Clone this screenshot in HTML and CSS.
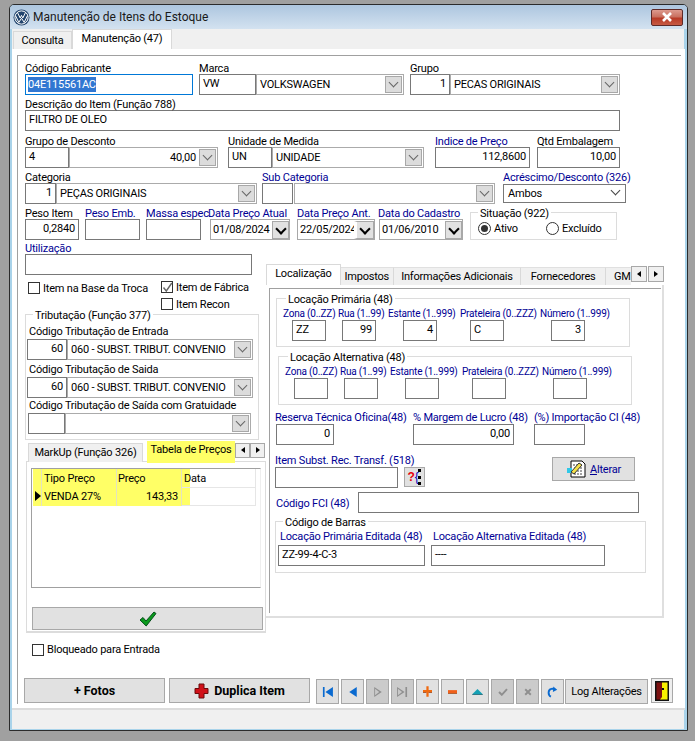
FILE: index.html
```html
<!DOCTYPE html>
<html lang="pt-br">
<head>
    <meta charset="UTF-8">
    <title>Manutenção de Itens do Estoque</title>
    <link rel="stylesheet" href="styles.css">
</head>
<body>
<div class="win">
    <div class="title">
        <svg class="logo" width="17" height="17" viewBox="0 0 17 17">
            <circle cx="8.5" cy="8.5" r="8" fill="#23456e"/>
            <circle cx="8.5" cy="8.5" r="6.6" fill="none" stroke="#fff" stroke-width="1"/>
            <path d="M4.6 3.8 L7.2 9 L8.5 6.4 L9.8 9 L12.4 3.8 M2.6 6.8 L5.8 13.4 L8.5 9.2 L11.2 13.4 L14.4 6.8" fill="none" stroke="#fff" stroke-width="1"/>
        </svg>
        <span class="title-text">Manutenção de Itens do Estoque</span>
        <div class="close">
            <svg width="12" height="10" viewBox="0 0 12 10"><path d="M2 1 L10 9 M10 1 L2 9" stroke="#fff" stroke-width="2.6"/></svg>
        </div>
    </div>

    <div class="client">
        <div class="main-tabs">
            <div class="main-tab">Consulta</div>
            <div class="main-tab on">Manutenção (47)</div>
        </div>

        <div class="page">
            <div class="group">

                <div class="row r1">
                    <div class="f f-codigo">
                        <label>Código Fabricante</label>
                        <div class="box focus"><span class="sel">04E115561AC</span></div>
                    </div>
                    <div class="f f-marca">
                        <label>Marca</label>
                        <div class="pair"><div class="box b-57">VW</div><div class="combo">VOLKSWAGEN<i class="arrow"></i></div></div>
                    </div>
                    <div class="f f-grupo">
                        <label>Grupo</label>
                        <div class="pair"><div class="box b-40 num">1</div><div class="combo">PECAS ORIGINAIS<i class="arrow"></i></div></div>
                    </div>
                </div>

                <div class="row r2">
                    <div class="f f-desc">
                        <label>Descrição do Item (Função 788)</label>
                        <div class="box">FILTRO DE OLEO</div>
                    </div>
                </div>

                <div class="row r3">
                    <div class="f f-gdesc">
                        <label>Grupo de Desconto</label>
                        <div class="pair"><div class="box b-44">4</div><div class="combo num">40,00<i class="arrow"></i></div></div>
                    </div>
                    <div class="f f-unid">
                        <label>Unidade de Medida</label>
                        <div class="pair"><div class="box b-44">UN</div><div class="combo">UNIDADE<i class="arrow"></i></div></div>
                    </div>
                    <div class="f f-indice">
                        <label class="blue">Indice de Preço</label>
                        <div class="box num">112,8600</div>
                    </div>
                    <div class="f f-qtd">
                        <label>Qtd Embalagem</label>
                        <div class="box num">10,00</div>
                    </div>
                </div>

                <div class="row r4">
                    <div class="f f-cat">
                        <label>Categoria</label>
                        <div class="pair"><div class="box b-31 num">1</div><div class="combo">PEÇAS ORIGINAIS<i class="arrow"></i></div></div>
                    </div>
                    <div class="f f-sub">
                        <label class="blue">Sub Categoria</label>
                        <div class="pair"><div class="box b-31"></div><div class="combo gap1"><i class="arrow"></i></div></div>
                    </div>
                    <div class="f f-acres">
                        <label class="blue">Acréscimo/Desconto (326)</label>
                        <div class="select">Ambos<i class="chev"></i></div>
                    </div>
                </div>

                <div class="row r5">
                    <div class="f f-peso">
                        <label>Peso Item</label>
                        <div class="box num">0,2840</div>
                    </div>
                    <div class="f f-emb">
                        <label class="blue">Peso Emb.</label>
                        <div class="box"></div>
                    </div>
                    <div class="f f-massa">
                        <label class="blue">Massa espec.</label>
                        <div class="box"></div>
                    </div>
                    <div class="f f-d1">
                        <label class="blue nowrap">Data Preço Atual</label>
                        <div class="date">01/08/2024<i class="dbtn"></i></div>
                    </div>
                    <div class="f f-d2">
                        <label class="blue nowrap">Data Preço Ant.</label>
                        <div class="date">22/05/2024<i class="dbtn"></i></div>
                    </div>
                    <div class="f f-d3">
                        <label class="blue nowrap">Data do Cadastro</label>
                        <div class="date">01/06/2010<i class="dbtn"></i></div>
                    </div>
                    <fieldset class="situacao">
                        <legend>Situação (922)</legend>
                        <div class="radios">
                            <span class="radio on"></span><span class="r-ativo">Ativo</span>
                            <span class="radio"></span><span>Excluído</span>
                        </div>
                    </fieldset>
                </div>

                <div class="lower">
                    <div class="left">
                        <label class="blue">Utilização</label>
                        <div class="box b-227"></div>

                        <div class="checks">
                            <div class="check c-base"><span class="cb"></span>Item na Base da Troca</div>
                            <div>
                                <div class="check"><span class="cb">
                                    <svg width="11" height="11" viewBox="0 0 11 11"><path d="M1.5 5.5 L4.3 9 L9.8 1" fill="none" stroke="#666" stroke-width="1.4"/></svg>
                                </span>Item de Fábrica</div>
                                <div class="check"><span class="cb"></span>Item Recon</div>
                            </div>
                        </div>

                        <fieldset class="trib">
                            <legend>Tributação (Função 377)</legend>
                            <label class="t-l1">Código Tributação de Entrada</label>
                            <div class="pair"><div class="box b-40 num">60</div><div class="combo clip">060 - SUBST. TRIBUT. CONVENIO<i class="arrow"></i></div></div>
                            <label class="t-l2">Código Tributação de Saida</label>
                            <div class="pair"><div class="box b-40 num">60</div><div class="combo clip">060 - SUBST. TRIBUT. CONVENIO<i class="arrow"></i></div></div>
                            <label class="t-l3">Código Tributação de Saída com Gratuidade</label>
                            <div class="pair t-p3"><div class="box b-37"></div><div class="combo"><i class="arrow"></i></div></div>
                        </fieldset>

                        <div class="sub-tabs">
                            <div class="sub-tab">MarkUp (Função 326)</div>
                            <div class="sub-tab hl">Tabela de Preços</div>
                            <div class="scroll"><i class="tri-l"></i></div>
                            <div class="scroll"><i class="tri-r"></i></div>
                        </div>
                        <div class="sub-panel">
                            <div class="grid">
                                <div class="g-row g-head">
                                    <div class="g-ind hl"></div>
                                    <div class="g-tipo hl">Tipo Preço</div>
                                    <div class="g-preco hl">Preço</div>
                                    <div class="g-data">Data</div>
                                </div>
                                <div class="g-row">
                                    <div class="g-ind hl"><i class="tri-cur"></i></div>
                                    <div class="g-tipo hl">VENDA 27%</div>
                                    <div class="g-preco hl num">143,33</div>
                                    <div class="g-data"></div>
                                </div>
                            </div>
                            <div class="btn ok">
                                <svg width="18" height="16" viewBox="0 0 18 16"><path d="M1 9 L4 6.5 L7 10 L15 1 L17 2.5 L7.2 15 Z" fill="#0a9a1c" stroke="#05501a" stroke-width="1"/></svg>
                            </div>
                        </div>

                        <div class="check c-bloq"><span class="cb"></span>Bloqueado para Entrada</div>
                    </div>

                    <div class="right">
                        <div class="loc-tabs">
                            <div class="loc-tab on t-loc">Localização</div>
                            <div class="loc-tab t-imp">Impostos</div>
                            <div class="loc-tab t-inf">Informações Adicionais</div>
                            <div class="loc-tab t-for">Fornecedores</div>
                            <div class="loc-tab t-gmi">GMI</div>
                            <div class="scroll s-first"><i class="tri-l"></i></div>
                            <div class="scroll"><i class="tri-r"></i></div>
                        </div>
                        <div class="loc-panel">
                            <div class="loc-inner">
                                <fieldset class="loc loc-1">
                                    <legend>Locação Primária (48)</legend>
                                    <div class="loc-cols">
                                        <div class="lc z"><label class="blue">Zona (0..ZZ)</label><div class="box">ZZ</div></div>
                                        <div class="lc u"><label class="blue">Rua (1..99)</label><div class="box num">99</div></div>
                                        <div class="lc e"><label class="blue">Estante (1..999)</label><div class="box num">4</div></div>
                                        <div class="lc p"><label class="blue">Prateleira (0..ZZZ)</label><div class="box">C</div></div>
                                        <div class="lc n"><label class="blue">Número (1..999)</label><div class="box num">3</div></div>
                                    </div>
                                </fieldset>
                                <fieldset class="loc loc-2">
                                    <legend>Locação Alternativa (48)</legend>
                                    <div class="loc-cols">
                                        <div class="lc z"><label class="blue">Zona (0..ZZ)</label><div class="box"></div></div>
                                        <div class="lc u"><label class="blue">Rua (1..99)</label><div class="box"></div></div>
                                        <div class="lc e"><label class="blue">Estante (1..999)</label><div class="box"></div></div>
                                        <div class="lc p"><label class="blue">Prateleira (0..ZZZ)</label><div class="box"></div></div>
                                        <div class="lc n"><label class="blue">Número (1..999)</label><div class="box"></div></div>
                                    </div>
                                </fieldset>

                                <div class="res-row">
                                    <div class="f f-res"><label class="blue nowrap">Reserva Técnica Oficina(48)</label><div class="box b-58 num">0</div></div>
                                    <div class="f f-mar"><label class="blue nowrap">% Margem de Lucro (48)</label><div class="box b-101 num">0,00</div></div>
                                    <div class="f f-imp"><label class="blue nowrap">(%) Importação CI (48)</label><div class="box b-51"></div></div>
                                </div>

                                <div class="subst-row">
                                    <div class="f f-subst">
                                        <label class="blue">Item Subst. Rec. Transf. (518)</label>
                                        <div class="subst-line">
                                            <div class="box b-123"></div>
                                            <div class="btn help"><span class="q">?</span><span class="br">{</span><span class="dots"></span></div>
                                        </div>
                                    </div>
                                    <div class="btn alterar">
                                        <svg width="21" height="18" viewBox="0 0 21 18">
                                            <path d="M5 1 H16 L19 4 V17 H5 Z" fill="#fff" stroke="#000"/>
                                            <path d="M1 8 H6 V13 H1 Z" fill="#30c8e8"/>
                                            <path d="M7 5 H15 M8 8 H17 M8 11 H17 M8 14 H17" stroke="#444" stroke-dasharray="2 1"/>
                                            <path d="M5 12 L13 3 L16 5 L8 14 Z" fill="#f4e04a" stroke="#333"/>
                                        </svg>
                                        <span><u>A</u>lterar</span>
                                    </div>
                                </div>

                                <div class="fci-row">
                                    <label class="blue">Código FCI (48)</label>
                                    <div class="box b-281"></div>
                                </div>

                                <fieldset class="barras">
                                    <legend>Código de Barras</legend>
                                    <div class="bar-cols">
                                        <div class="f f-bar1"><label class="blue nowrap">Locação Primária Editada (48)</label><div class="box">ZZ-99-4-C-3</div></div>
                                        <div class="f f-bar2"><label class="blue nowrap">Locação Alternativa Editada (48)</label><div class="box">----</div></div>
                                    </div>
                                </fieldset>
                            </div>
                        </div>
                    </div>
                </div>

                <div class="actions">
                    <div class="btn big b-fotos">+ Fotos</div>
                    <div class="btn big b-dup">
                        <svg width="15" height="16" viewBox="0 0 15 16"><path d="M5 1 H10 V5.5 H14 V10.5 H10 V15 H5 V10.5 H1 V5.5 H5 Z" fill="#d01018" stroke="#6a0a0a"/></svg>
                        Duplica Item
                    </div>
                    <div class="nav">
                        <div class="btn nb"><svg width="11" height="10" viewBox="0 0 13 12"><path d="M1 0 H3 V12 H1 Z M13 0 V12 L4 6 Z" fill="#0a6ad0"/></svg></div>
                        <div class="btn nb"><svg width="8" height="10" viewBox="1 0 9 12"><path d="M10 0 V12 L1 6 Z" fill="#0a6ad0"/></svg></div>
                        <div class="btn nb off"><svg width="8" height="10" viewBox="1 0 9 12"><path d="M1 0 V12 L10 6 Z" fill="#8f8f8f"/><path d="M2 2 V10 L7 6 Z" fill="#c8c8c8"/></svg></div>
                        <div class="btn nb off"><svg width="11" height="10" viewBox="0 0 13 12"><path d="M0 0 V12 L9 6 Z M10 0 H12 V12 H10 Z" fill="#8f8f8f"/><path d="M1 2 V10 L6 6 Z" fill="#c8c8c8"/></svg></div>
                        <div class="btn nb"><svg width="9" height="11" viewBox="0 0 12 14"><path d="M4.5 0 H7.5 V5 H12 V8 H7.5 V14 H4.5 V8 H0 V5 H4.5 Z" fill="#f06a10"/><path d="M0 8 H4.5 V9 H0 Z M7.5 8 H12 V9 H7.5 Z" fill="#9a3a08"/></svg></div>
                        <div class="btn nb"><svg width="9" height="4" viewBox="0 0 12 5"><path d="M0 0 H12 V4 H0 Z" fill="#f0601a"/><path d="M0 4 H12 V5 H0 Z" fill="#a04008"/></svg></div>
                        <div class="btn nb"><svg width="11" height="6" viewBox="0 0 14 8"><path d="M7 0 L14 7 H0 Z" fill="#14a0b4"/><path d="M0 7 H14 V8 H0 Z" fill="#0a5a6a"/></svg></div>
                        <div class="btn nb off"><svg width="10" height="8" viewBox="0 0 12 10"><path d="M1 5 L4.5 8.5 L11 1.5" fill="none" stroke="#8f8f8f" stroke-width="2.4"/></svg></div>
                        <div class="btn nb off"><svg width="8" height="8" viewBox="0 0 10 10"><path d="M1.5 1.5 L8.5 8.5 M8.5 1.5 L1.5 8.5" stroke="#8f8f8f" stroke-width="2.4"/></svg></div>
                        <div class="btn nb"><svg width="11" height="12" viewBox="0 0 14 14"><path d="M5 13 C1 11 1 4 5.5 3 C7 2.6 8 2.8 9 3.4" fill="none" stroke="#0a6ad0" stroke-width="2.4"/><path d="M8 0 L13 4 L7.5 7 Z" fill="#0a6ad0"/></svg></div>
                    </div>
                    <div class="btn log">Log Alterações</div>
                    <div class="btn door">
                        <svg width="14" height="20" viewBox="0 0 14 20"><path d="M0 0 H14 V20 H0 Z" fill="#111"/><path d="M1.5 1.5 H7 V18.5 H1.5 Z" fill="#7a1010"/><path d="M7 1.5 H12.5 V18.5 H5 L7 16 Z" fill="#f8f000"/><path d="M7 7 H9 V9 H7 Z" fill="#111"/></svg>
                    </div>
                </div>

            </div>
        </div>
        <div class="status"></div>
    </div>
</div>
</body>
</html>
```

FILE: styles.css
```css
* { box-sizing: border-box; }

body {
    margin: 0;
    height: 741px;
    overflow: hidden;
    background-color: #a0a0a0;
    font-family: Roboto, "Liberation Sans", sans-serif;
    font-size: 11px;
    letter-spacing: -0.2px;
    color: #000;
}

/* janela */
.win {
    margin: 4px 0 0 9px;
    width: 679px;
    height: 727px;
    border: 1px solid #2b2b2b;
    border-radius: 5px 5px 0 0;
    background-color: #a9d3ea;
    padding: 0 3px 2px 2px;
    overflow: hidden;
}

.title {
    display: flex;
    align-items: center;
    height: 24px;
    margin: 0 -3px 0 -2px;
    padding: 0 4px 0 3px;
    background: linear-gradient(#adc6df, #d3e2f0);
}
.logo { margin-right: 3px; }
.title-text { font-size: 12px; letter-spacing: 0; color: #1a1a1a; }
.close {
    margin-left: auto;
    width: 32px;
    height: 17px;
    display: flex;
    align-items: center;
    justify-content: center;
    border: 1px solid #5e2a28;
    border-radius: 2px;
    background: linear-gradient(#dd9a8e 0, #c9705f 45%, #b83a26 55%, #c65a44 100%);
}

.client {
    height: 700px;
    background-color: #f0f0f0;
    display: flex;
    flex-direction: column;
}

/* abas de cima */
.main-tabs {
    display: flex;
    height: 20px;
    padding-left: 1px;
    align-items: flex-end;
}
.main-tab {
    height: 18px;
    width: 59px;
    line-height: 18px;
    text-align: center;
    background-color: #f0f0f0;
    border: 1px solid #d9d9d9;
    border-bottom: none;
}
.main-tab.on {
    height: 20px;
    width: 100px;
    background-color: #fff;
}

.page {
    height: 661px;
    background-color: #fff;
    padding: 6px 4px 0 5px;
    border-bottom: 2px solid #dcdcdc;
    margin-right: -1px;
}
.group {
    height: 649px;
    border-top: 1px solid #a0a0a0;
    border-left: 1px solid #a0a0a0;
    padding: 5px 0 0 7px;
    display: flex;
    flex-direction: column;
}
.status { flex: 1; }

/* campos */
label { display: block; height: 13px; line-height: 15px; white-space: nowrap; }
.blue, .blue * { color: #000094; }
.nowrap { white-space: nowrap; }
.row { display: flex; }
.r2 { margin-top: 2px; }
.r3 { margin-top: 3px; }
.r4, .r5 { margin-top: 2px; }

.box {
    height: 21px;
    line-height: 18px;
    padding: 0 3px 0 3px;
    background-color: #fff;
    border: 1px solid #787878;
    white-space: nowrap;
    overflow: hidden;
    flex: none;
}
.num { text-align: right; }
.focus { border-color: #0078d7; padding: 0 2px; line-height: 19px; }
.sel { background-color: #3077d2; color: #fff; display: inline-block; line-height: 15px; }

.pair { display: flex; }
.combo {
    flex: 1;
    min-width: 0;
    height: 21px;
    line-height: 20px;
    padding: 0 21px 0 3px;
    margin-left: 0;
    border: 1px solid #ababab;
    background-color: #fff;
    white-space: nowrap;
    position: relative;
}
.combo.clip { padding-right: 19px; overflow: hidden; }
.gap1 { margin-left: 1px; }
.arrow {
    position: absolute;
    right: 1px;
    top: 1px;
    width: 17px;
    height: 17px;
    background-color: #dcdcdc;
    border: 1px solid #a8a8a8;
}
.arrow::after {
    content: "";
    position: absolute;
    left: 4px;
    top: 2px;
    width: 6px;
    height: 6px;
    border-right: 1px solid #666;
    border-bottom: 1px solid #666;
    transform: rotate(45deg);
}

.select {
    height: 19px;
    line-height: 17px;
    margin-top: 1px;
    padding: 0 4px;
    border: 1px solid #787878;
    background-color: #fff;
    position: relative;
}
.chev {
    position: absolute;
    right: 6px;
    top: 2px;
    width: 7px;
    height: 7px;
    border-right: 1px solid #444;
    border-bottom: 1px solid #444;
    transform: rotate(45deg);
}

.date {
    height: 21px;
    line-height: 19px;
    padding-left: 2px;
    border: 1px solid #a8a8a8;
    background-color: #fff;
    position: relative;
    white-space: nowrap;
    overflow: hidden;
}
.dbtn {
    position: absolute;
    right: 0;
    top: 1px;
    width: 17px;
    height: 18px;
    background-color: #e1e1e1;
    border: 1px solid #a8a8a8;
}
.dbtn::after {
    content: "";
    position: absolute;
    left: 4px;
    top: 3px;
    width: 6px;
    height: 6px;
    border-right: 2px solid #000;
    border-bottom: 2px solid #000;
    transform: rotate(45deg);
}
.f-d2 .dbtn { width: 20px; border-left: 3px solid #fff; }

/* larguras dos campos */
.f-codigo { width: 168px; }
.f-marca { width: 205px; margin-left: 6px; }
.f-grupo { width: 210px; margin-left: 6px; }
.f-desc { width: 595px; }
.f-gdesc { width: 193px; }
.f-unid { width: 196px; margin-left: 10px; }
.f-indice { width: 95px; margin-left: 11px; }
.f-qtd { width: 83px; margin-left: 7px; }
.f-cat { width: 232px; }
.f-sub { width: 233px; margin-left: 5px; }
.f-acres { width: 123px; margin-left: 8px; }
.f-peso { width: 54px; }
.f-emb { width: 55px; margin-left: 6px; }
.f-massa { width: 55px; margin-left: 6px; }
.f-d1 { width: 80px; margin-left: 9px; }
.f-d1 label { margin-left: -2px; }
.f-d2 { width: 78px; margin-left: 7px; }
.f-d3 { width: 84px; margin-left: 4px; }
.f-d3 label { margin-left: -1px; }
.b-31 { width: 31px; }
.b-37 { width: 37px; }
.b-40 { width: 40px; }
.b-44 { width: 44px; }
.b-51 { width: 51px; }
.b-57 { width: 57px; }
.b-58 { width: 58px; }
.b-101 { width: 101px; }
.b-123 { width: 123px; }
.b-227 { width: 227px; }
.b-281 { width: 281px; }

/* grupos */
fieldset {
    margin: 0;
    padding: 0;
    border: 1px solid #dcdcdc;
    min-width: 0;
}
legend { padding: 0 2px; line-height: 15px; height: 13px; white-space: nowrap; }

.situacao {
    width: 147px;
    margin: 0 0 0 7px;
    height: 34px;
    padding-left: 7px;
}
.radios { display: flex; align-items: center; margin-top: 3px; }
.radio {
    width: 13px;
    height: 13px;
    margin-right: 3px;
    border: 1px solid #333;
    border-radius: 50%;
    background-color: #fff;
    flex: none;
    position: relative;
}
.radio.on::after {
    content: "";
    position: absolute;
    left: 2px;
    top: 2px;
    width: 7px;
    height: 7px;
    border-radius: 50%;
    background-color: #333;
}
.r-ativo { width: 52px; }

/* parte de baixo */
.lower { display: flex; margin-top: 1px; }
.left { width: 241px; flex: none; }

.checks { display: flex; margin-top: 4px; padding-left: 3px; }
.check { display: flex; align-items: center; height: 17px; white-space: nowrap; }
.cb {
    width: 12px;
    height: 12px;
    margin-right: 3px;
    border: 1px solid #333;
    background-color: #fff;
    flex: none;
    margin-top: -2px;
}
.cb svg { display: block; }
.c-base { width: 133px; margin-top: 1px; }

.trib {
    width: 234px;
    height: 132px;
    margin-top: -5px;
    padding: 0 5px 0 1px;
}
.trib legend { margin-left: 6px; }
.trib label { padding-left: 2px; }
.t-l1 { margin: 3px 0 2px; }
.t-l2 { margin: 2px 0 2px; }
.t-l3 { margin: 0 0 2px; padding-left: 3px; }
.t-p3 { margin-left: 1px; width: 223px; }

/* abas pequenas */
.sub-tabs {
    display: flex;
    height: 22px;
    margin-top: 1px;
    padding-left: 3px;
    align-items: flex-start;
}
.sub-tab {
    margin-top: 2px;
    height: 19px;
    line-height: 17px;
    width: 115px;
    text-align: center;
    white-space: nowrap;
    background-color: #f0f0f0;
    border: 1px solid #d9d9d9;
    border-bottom: none;
}
.sub-tab.hl {
    margin: 0 0 0 4px;
    width: 88px;
    height: 22px;
    border: none;
    line-height: 18px;
}
.hl { background-color: #ffff66 !important; }
.scroll {
    width: 15px;
    height: 15px;
    margin-top: 2px;
    background-color: #f0f0f0;
    border: 1px solid #a8a8a8;
    position: relative;
    flex: none;
}
.tri-l, .tri-r {
    position: absolute;
    top: 3px;
    left: 5px;
    width: 0;
    height: 0;
    border-top: 3px solid transparent;
    border-bottom: 3px solid transparent;
}
.tri-l { border-right: 4px solid #000; }
.tri-r { border-left: 4px solid #000; }

.sub-panel {
    height: 172px;
    margin-left: 1px;
    margin-top: -2px;
    padding: 6px 4px 0 4px;
    background-color: #fff;
    border: 1px solid #dcdcdc;
    border-bottom-width: 2px;
}
.grid {
    height: 120px;
    border-top: 1px solid #a0a0a0;
    border-left: 1px solid #a0a0a0;
    border-bottom: 1px solid #a0a0a0;
    border-right: 1px solid #eee;
    padding-left: 1px;
}
.g-row { display: flex; height: 18px; line-height: 17px; }
.g-head { height: 19px; line-height: 19px; }
.g-ind { width: 9px; position: relative; border-right: 1px solid #e3e3c0; }
.g-tipo { width: 75px; padding-left: 2px; border-right: 1px solid #e3e3c0; }
.g-preco { width: 65px; padding: 0 3px; border-right: 1px solid #e3e3c0; }
.g-head .g-preco { text-align: left; padding-left: 1px; }
.g-data {
    width: 74px;
    padding-left: 2px;
    border-right: 1px solid #e6e6e6;
    border-bottom: 1px solid #e6e6e6;
    background: linear-gradient(to right, #ffff66 8px, transparent 8px);
}
.tri-cur {
    position: absolute;
    left: 2px;
    top: 3px;
    width: 0;
    height: 0;
    border-top: 5px solid transparent;
    border-bottom: 5px solid transparent;
    border-left: 6px solid #000;
}

.btn {
    display: flex;
    align-items: center;
    justify-content: center;
    background-color: #e1e1e1;
    border: 1px solid #a8a8a8;
    white-space: nowrap;
}
.ok { height: 23px; margin: 19px 0 0 1px; width: 231px; }
.c-bloq { margin: 8px 0 0 7px; }
.c-bloq .cb { margin-top: 0; }

/* lado direito */
.right { width: 398px; margin-top: 23px; }
.loc-tabs { display: flex; height: 21px; align-items: flex-end; }
.loc-tab {
    height: 18px;
    line-height: 17px;
    text-align: center;
    background-color: #f0f0f0;
    border-top: 1px solid #e0e0e0;
    border-right: 1px solid #d9d9d9;
    white-space: nowrap;
    overflow: hidden;
}
.loc-tab.on {
    height: 21px;
    line-height: 18px;
    background-color: #fff;
    border: 1px solid #d9d9d9;
    border-bottom: none;
}
.t-loc { width: 75px; }
.t-imp { width: 53px; }
.t-inf { width: 128px; }
.t-for { width: 85px; }
.t-gmi { width: 25px; text-align: left; padding-left: 8px; border-right: none; }
.loc-tabs .scroll { width: 16px; height: 16px; margin: 0 0 3px 0; align-self: flex-end; }
.loc-tabs .scroll i { left: 5px; top: 4px; }
.s-first { margin-right: 1px !important; }

.loc-panel {
    height: 333px;
    padding: 3px 0 0 3px;
    background-color: #fff;
    border-right: 2px solid #dfdfdf;
    border-bottom: 2px solid #dfdfdf;
}
.loc-inner {
    height: 325px;
    width: 392px;
    border-top: 1px solid #a0a0a0;
    border-left: 1px solid #a0a0a0;
    position: relative;
}

.loc { width: 354px; height: 55px; padding-left: 6px; }
.loc legend { margin-left: 3px; }
.loc-1 { margin: 3px 0 0 6px; }
.loc-2 { margin: 3px 0 0 8px; }
.loc-cols { display: flex; padding-top: 2px; }
.lc { flex: none; }
.lc label { font-size: 10px; height: 12px; line-height: 13px; margin-bottom: 1px; }
.lc .box { width: 34px; }
.z { width: 55px; }
.z .box { margin-left: 9px; }
.u { width: 50px; }
.u .box { margin-left: 4px; }
.e { width: 72px; }
.e .box { margin-left: 15px; }
.p { width: 80px; }
.p .box { margin-left: 10px; }
.n { width: 68px; }
.n .box { margin-left: 11px; }

.res-row { display: flex; margin: 5px 0 0 5px; }
.f-res { width: 138px; padding-left: 1px; }
.f-res label { margin-left: -1px; margin-bottom: 1px; }
.f-mar label, .f-imp label { margin-bottom: 1px; }
.f-mar { width: 121px; }
.f-imp { width: 60px; }

.subst-row { display: flex; margin: 8px 0 0 5px; height: 35px; }
.f-subst { width: 277px; flex: none; }
.f-subst label { margin-bottom: 1px; }
.subst-line { display: flex; }
.help {
    width: 21px;
    height: 20px;
    margin-left: 6px;
    gap: 0;
    font-family: "Liberation Sans", sans-serif;
    font-size: 12px;
}
.q { color: #e8000a; font-weight: bold; }
.br { color: #0000c0; }
.dots { width: 3px; height: 16px; border-left: 3px dotted #000; }
.alterar { width: 83px; height: 24px; margin-top: 4px; gap: 3px; }
.alterar span { color: #000094; }

.fci-row { display: flex; align-items: center; margin: 4px 0 0 6px; }
.fci-row label { width: 82px; }

.barras { width: 371px; height: 58px; margin: 2px 0 0 5px; padding-left: 2px; }
.barras legend { margin-left: 5px; }
.bar-cols { display: flex; padding-top: 1px; }
.bar-cols label { margin: 0 0 3px 2px; }
.f-bar1 { width: 147px; }
.f-bar2 { width: 174px; margin-left: 6px; }

/* botoes de baixo */
.actions { display: flex; margin: auto 0 0 -1px; height: 26px; }
.big { height: 25px; font-weight: bold; font-size: 12.5px; letter-spacing: 0; }
.b-fotos { width: 141px; }
.b-dup { width: 141px; margin-left: 4px; gap: 5px; }
.nav { display: flex; gap: 2px; margin-left: 6px; }
.nb { width: 23px; height: 25px; margin-top: 1px; }
.nb.off { background-color: #cbcbcb; }
.log { width: 83px; height: 25px; margin: 1px 0 0 1px; }
.door { width: 22px; height: 25px; margin-left: 3px; background-color: #eee; }
```
